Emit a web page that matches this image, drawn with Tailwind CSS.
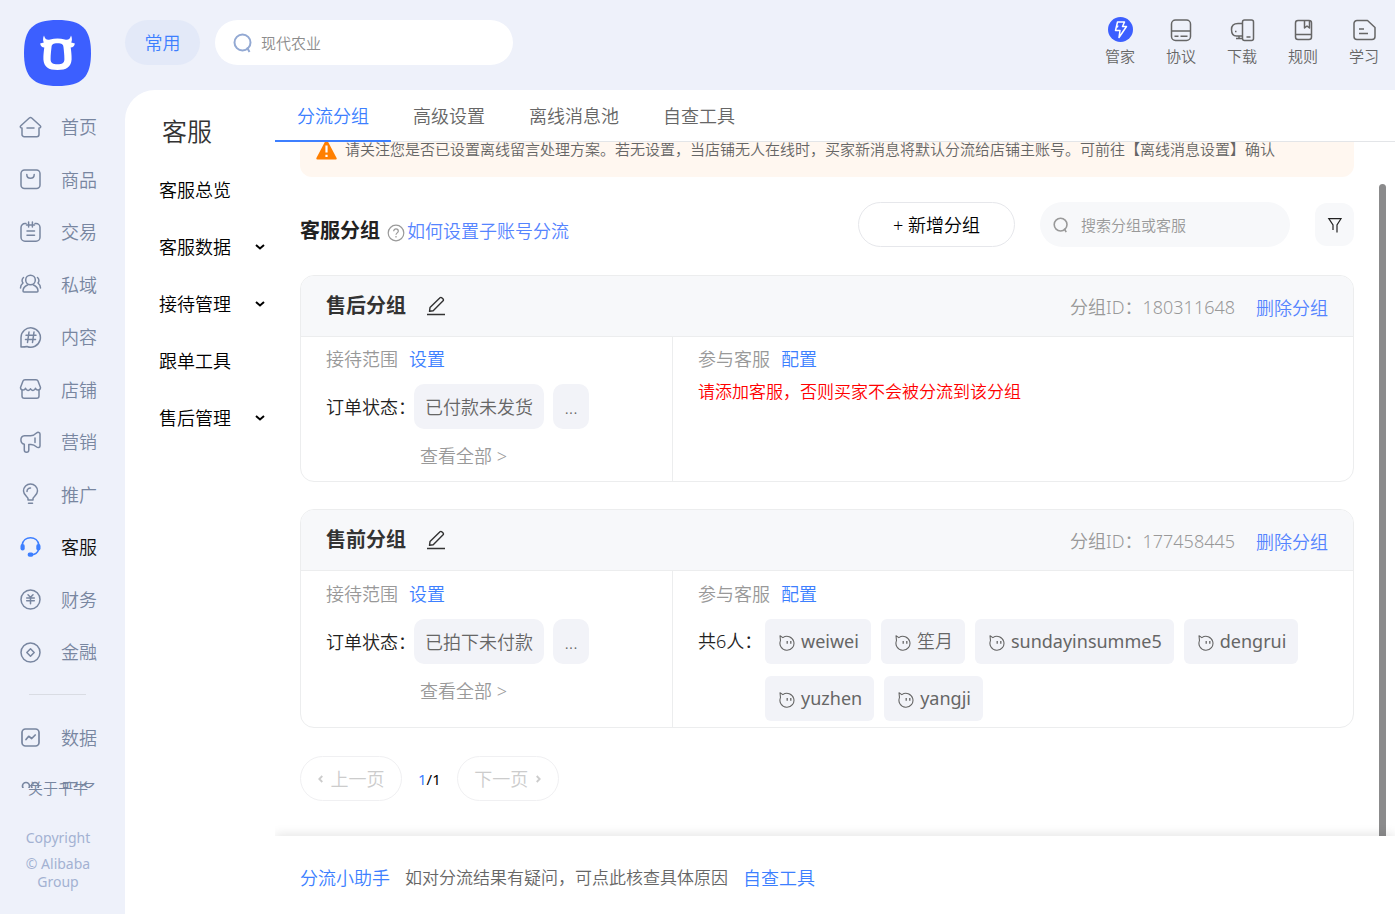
<!DOCTYPE html>
<html lang="zh-CN">
<head>
<meta charset="utf-8">
<meta name="viewport" content="width=device-width, initial-scale=1">
<title>客服分组</title>
<script src="https://cdn.jsdelivr.net/npm/@tailwindcss/browser@4"></script>
</head>
<body class="flex h-screen overflow-hidden bg-[#eef1fa] font-['Noto_Sans','Noto_Sans_CJK_SC',sans-serif] text-lg leading-6 font-[350] text-[#111]">

<!-- icon symbols -->
<svg class="hidden" aria-hidden="true">
  <symbol id="pencil" viewBox="0 0 20 20"><path d="M1 18.6h18" stroke="currentColor" stroke-width="1.5"/><path d="M4 11.600 14 1.700a1.200 1.200 0 0 1 1.700 0l1.400 1.400a1.200 1.200 0 0 1 0 1.700L7.200 14.700l-3.700.6z" fill="none" stroke="currentColor" stroke-width="1.400" stroke-linejoin="round"/></symbol>
  <symbol id="wang" viewBox="0 0 16 16"><path d="M1 .8 3.900 2.600A7 7 0 1 1 1.500 5.600z" fill="none" stroke="currentColor" stroke-width="1.100" stroke-linejoin="round"/><path d="M8.200 6v2.800M11.800 6v2.800" stroke="currentColor" stroke-width="1.300"/></symbol>
  <symbol id="down" viewBox="0 0 10 6"><path d="M1 1l4 3.500L9 1" fill="none" stroke="currentColor" stroke-width="2"/></symbol>
  <symbol id="search" viewBox="0 0 20 20"><circle cx="9.500" cy="9.500" r="8" fill="none" stroke="currentColor" stroke-width="2"/><path d="M14 14.500l2.500 4.500" stroke="currentColor" stroke-width="2"/></symbol>
</svg>

<aside class="flex w-[125px] shrink-0 flex-col pt-5 text-[#7886a0]">
  <svg class="ml-6 h-[66px] w-[67px] shrink-0" viewBox="0 0 67 66" role="img" aria-label="千牛">
    <path d="M33.500 0C58 0 67 9 67 33S58 66 33.500 66 0 57 0 33 9 0 33.500 0z" fill="#3c5fff"/>
    <path fill="#fff" fill-rule="evenodd" d="M20 15.500c.8 3.500 2.900 5 6.200 4 4.800-1.300 9.800-1.300 14.600 0 3.300 1 5.400-.5 6.200-4 1.200 2.500 1.200 5 .2 7l3.700 1c-.5 2.500-2 3.900-4.200 4 .5 4 1 7 .9 12-.5 7.500-5 10.500-14.100 10.500s-13.600-3-14.100-10.500c-.1-5 .4-8 .9-12-2.200-.1-3.700-1.500-4.200-4l3.700-1c-1-2-1-4.500.2-7zM33.500 23.300c-4.500 0-5.700 1-6 4-.4 4-.9 7-.9 12 0 3.800 2.400 5 6.900 5s6.900-1.200 6.900-5c0-5-.5-8-.9-12-.3-3-1.500-4-6-4z"/>
  </svg>

  <nav class="mt-[15px] min-h-0 flex-1 overflow-hidden" aria-label="主导航">
    <div class="flex h-[577px] flex-col justify-between">
      <a href="#" class="flex h-[52px] items-center gap-[19px] pl-[19px]"><svg class="size-[23px]" viewBox="0 0 23 23" fill="none" stroke="currentColor" stroke-width="1.500" stroke-linecap="round" stroke-linejoin="round"><path d="M3 12v6.500a2.200 2.200 0 0 0 2.200 2.200h12.600a2.200 2.200 0 0 0 2.200-2.200V12c1.600 0 2.200-1.300 1.200-2.200L12.700 2a1.800 1.800 0 0 0-2.400 0L1.800 9.800C.8 10.700 1.400 12 3 12z"/><path d="M8 12h7"/></svg>首页</a>
      <a href="#" class="flex h-[52px] items-center gap-[19px] pl-[19px]"><svg class="size-[23px]" viewBox="0 0 23 23" fill="none" stroke="currentColor" stroke-width="1.500" stroke-linecap="round"><rect x="2" y="2" width="19" height="18.500" rx="3.500"/><path d="M7.800 6.500c0 5 7.400 5 7.400 0"/></svg>商品</a>
      <a href="#" class="flex h-[52px] items-center gap-[19px] pl-[19px]"><svg class="size-[23px]" viewBox="0 0 23 23" fill="none" stroke="currentColor" stroke-width="1.500" stroke-linecap="round"><path d="M7 2.500H6A4 4 0 0 0 2 6.500v9.700a4 4 0 0 0 4 4h11a4 4 0 0 0 4-4V6.500a4 4 0 0 0-4-4h-1M7.500 4h8M9.600 1v5M13.400 1v5M8 10h7.500M8 14.200h7.500"/></svg>交易</a>
      <a href="#" class="flex h-[52px] items-center gap-[19px] pl-[19px]"><svg class="size-[23px]" viewBox="0 0 23 23" fill="none" stroke="currentColor" stroke-width="1.500" stroke-linecap="round" stroke-linejoin="round"><circle cx="11.500" cy="7" r="4.800"/><path d="M8.500 12c-3 1.300-4.500 3.500-4.500 6 0 .7.400 1 1 1h13c.6 0 1-.3 1-1 0-2.500-1.500-4.700-4.500-6M4.500 4.500C2.800 6 2.600 8.500 4 10c-1.700 1.300-2.500 3-2.500 5M18.500 4.500c1.700 1.500 1.900 4 .5 5.500 1.700 1.300 2.500 3 2.500 5"/></svg>私域</a>
      <a href="#" class="flex h-[52px] items-center gap-[19px] pl-[19px]"><svg class="size-[23px]" viewBox="0 0 23 23" fill="none" stroke="currentColor" stroke-width="1.500" stroke-linecap="round" stroke-linejoin="round"><path d="M2 21V11.500a9.700 9.700 0 1 1 6 9c-1.500.5-4 .5-6 .5z"/><path d="M10 6 8.500 16.500M15 6l-1.500 10.500M7 9.200h10M6.500 13.500h10"/></svg>内容</a>
      <a href="#" class="flex h-[52px] items-center gap-[19px] pl-[19px]"><svg class="size-[23px]" viewBox="0 0 23 23" fill="none" stroke="currentColor" stroke-width="1.500" stroke-linecap="round" stroke-linejoin="round"><path d="M6 1.800h11c1 0 1.700.5 2 1.300l2.500 6.400c0 3-4 3.500-5 .8-1 2.700-4 2.700-5 .5-1 2.200-4 2.200-5-.5-1 2.700-5 2.200-5-.8L4 3.100c.3-.8 1-1.300 2-1.300zM3 12v6c0 1.500.7 2.300 2.300 2.300h12.400c1.600 0 2.300-.8 2.300-2.300v-6"/></svg>店铺</a>
      <a href="#" class="flex h-[52px] items-center gap-[19px] pl-[19px]"><svg class="size-[23px]" viewBox="0 0 23 23" fill="none" stroke="currentColor" stroke-width="1.500" stroke-linecap="round" stroke-linejoin="round"><path d="M5.500 4.800h6c2.500 0 4.500-1.300 6-2.800 1.400-1.200 3.500-.6 3.500 1v12c0 1.600-2 2-3.300 1-1.700-1.500-3-2.500-5.700-2.500h-2.200V19c0 3-4.500 3-4.500 0v-5.800C1 12.500.5 5.500 5.500 4.800zM16 7v4.500"/></svg>营销</a>
      <a href="#" class="flex h-[52px] items-center gap-[19px] pl-[19px]"><svg class="size-[23px]" viewBox="0 0 23 23" fill="none" stroke="currentColor" stroke-width="1.500" stroke-linecap="round" stroke-linejoin="round"><path d="M9 17v-1.500c0-1.200-4.500-3.500-4.500-7.500a7 7 0 0 1 14 0c0 4-4.500 6.300-4.500 7.500V17zM9.500 20.200h4M8 8.500c0-1.800 1.500-3.500 3.500-3.500"/></svg>推广</a>
      <a href="#" aria-current="page" class="flex h-[52px] items-center gap-[19px] pl-[19px] text-[#111]"><svg class="size-[23px] text-[#3d7fff]" viewBox="0 0 23 23" fill="none" stroke="currentColor" stroke-width="1.600"><path d="M3 9.500C4.300-.8 18.700-.8 20 9.500M19.500 14c-1 2.500-3.500 4.500-6.500 4.800"/><rect x="1.500" y="8" width="4.200" height="6.500" rx="2" fill="currentColor" stroke="none"/><rect x="17.300" y="8" width="4.200" height="6.500" rx="2" fill="currentColor" stroke="none"/><rect x="8.700" y="16.500" width="5.600" height="4.200" rx="1.800" fill="currentColor" stroke="none"/></svg>客服</a>
      <a href="#" class="flex h-[52px] items-center gap-[19px] pl-[19px]"><svg class="size-[23px]" viewBox="0 0 23 23" fill="none" stroke="currentColor" stroke-width="1.500" stroke-linecap="round"><circle cx="11.500" cy="11.500" r="9.500"/><path d="M9 6.800l2.500 2.500L14 6.800M11.500 9.300v6.500M7.700 10h7.600M7.700 12.800h7.600"/></svg>财务</a>
      <a href="#" class="flex h-[52px] items-center gap-[19px] pl-[19px]"><svg class="size-[23px]" viewBox="0 0 23 23" fill="none" stroke="currentColor" stroke-width="1.500" stroke-linejoin="round"><circle cx="11.500" cy="11.500" r="9.500"/><path d="M11.500 7.800l3.700 3.700-3.700 3.700-3.700-3.700z"/></svg>金融</a>
    </div>
    <hr class="my-4 ml-[29px] w-[57px] border-[#d9dce3]">
    <a href="#" class="flex h-[53px] items-center gap-[19px] pl-[19px]"><svg class="size-[23px]" viewBox="0 0 23 23" fill="none" stroke="currentColor" stroke-width="1.700" stroke-linecap="round" stroke-linejoin="round"><rect x="3" y="3" width="17" height="17" rx="3.500"/><path d="M7 13.500l2.700-3.200 3 2.200L16.200 9"/></svg>数据</a>
    <a href="#" class="flex h-[52px] items-center gap-[19px] pl-[19px]"><svg class="size-[23px]" viewBox="0 0 23 23" fill="none" stroke="currentColor" stroke-width="1.700"><circle cx="7" cy="7" r="3.500"/><circle cx="16" cy="7" r="3.500"/><circle cx="7" cy="16" r="3.500"/><circle cx="16" cy="16" r="3.500"/></svg>服务</a>
  </nav>

  <div class="flex h-[126px] w-[116px] shrink-0 flex-col items-center text-center leading-[18px] text-[#a3b1d2]">
    <a href="#" class="-mt-[9px] text-[15px] text-[#7886a0]">关于千牛</a>
    <div class="mt-8 text-sm leading-[18px] font-normal">
      <p>Copyright</p>
      <p class="mt-2">© Alibaba<br>Group</p>
    </div>
  </div>
</aside>

<div class="flex min-w-0 flex-1 flex-col">
  <header class="flex h-[90px] shrink-0 items-start gap-[15px] pt-5 pr-4">
    <button class="h-[45px] w-[75px] rounded-full bg-[#e3e9f8] text-[#3d7fff]">常用</button>
    <label class="flex h-[45px] w-[298px] items-center gap-2 rounded-full bg-white pl-[18px]">
      <svg class="size-5 text-[#93a9d3]" aria-hidden="true"><use href="#search"/></svg>
      <input type="text" aria-label="搜索" placeholder="现代农业" class="min-w-0 flex-1 bg-transparent text-[15px] outline-none placeholder:text-[#8c8c8c]">
    </label>
    <nav class="-mt-1 ml-auto flex gap-[31px] text-[15px] leading-[22px] text-[#666]" aria-label="工具">
      <a href="#" class="flex w-[30px] flex-col items-center gap-[2px]"><svg class="size-[27px]" viewBox="0 0 27 27"><circle cx="13.500" cy="13.500" r="12.500" fill="#3c5fff"/><path d="M10.500 6h7l-2 4.500h4L12 21.500l1-7H8.500z" fill="none" stroke="#fff" stroke-width="1.500" stroke-linejoin="round"/><path d="M11 9.500l-.8 2" stroke="#fff" stroke-width="1.300"/></svg>管家</a>
      <a href="#" class="flex w-[30px] flex-col items-center gap-[2px]"><svg class="size-[27px]" viewBox="0 0 27 27" fill="none" stroke="currentColor" stroke-width="1.500"><rect x="3.500" y="4" width="19" height="20.500" rx="4"/><path d="M3.500 15h19M6.500 20.300h4M12.500 20.300h7"/></svg>协议</a>
      <a href="#" class="flex w-[30px] flex-col items-center gap-[2px]"><svg class="size-[27px]" viewBox="0 0 27 27" fill="none" stroke="currentColor" stroke-width="1.500"><rect x="13.500" y="4" width="11" height="20.500" rx="2"/><path d="M13.500 7.500H9c-4 0-6.500 2-6.500 6s1.500 6.500 5 6.500h6M10 20v2.500M7 22.500h6.500M17.500 21h4M6 15.500h1.500"/></svg>下载</a>
      <a href="#" class="flex w-[30px] flex-col items-center gap-[2px]"><svg class="size-[27px]" viewBox="0 0 27 27" fill="none" stroke="currentColor" stroke-width="1.500" stroke-linejoin="round"><rect x="5.500" y="4.500" width="16" height="19" rx="2.500"/><path d="M5.500 18.500h16M14.500 4.500v7.500l2.500-2 2.500 2V4.500"/></svg>规则</a>
      <a href="#" class="flex w-[30px] flex-col items-center gap-[2px]"><svg class="size-[27px]" viewBox="0 0 27 27" fill="none" stroke="currentColor" stroke-width="1.500" stroke-linejoin="round"><path d="M7 4.500h9.500l7.500 7v9a3 3 0 0 1-3 3H6a3 3 0 0 1-3-3v-13a3 3 0 0 1 3-3zM8 13h5M8 17.500h9"/></svg>学习</a>
    </nav>
  </header>

  <div class="flex min-h-0 flex-1 rounded-tl-[30px] bg-white">
    <nav class="w-[150px] shrink-0 pt-[23px]" aria-label="客服">
      <h1 class="pl-[37px] text-[25px] leading-9 text-[#333]">客服</h1>
      <ul class="mt-3 text-black">
        <li><a href="#" class="flex h-[57px] items-center pl-[34px]">客服总览</a></li>
        <li><a href="#" class="flex h-[57px] items-center justify-between pr-[10px] pl-[34px]">客服数据<svg class="h-[6px] w-[10px]"><use href="#down"/></svg></a></li>
        <li><a href="#" class="flex h-[57px] items-center justify-between pr-[10px] pl-[34px]">接待管理<svg class="h-[6px] w-[10px]"><use href="#down"/></svg></a></li>
        <li><a href="#" class="flex h-[57px] items-center pl-[34px]">跟单工具</a></li>
        <li><a href="#" class="flex h-[57px] items-center justify-between pr-[10px] pl-[34px]">售后管理<svg class="h-[6px] w-[10px]"><use href="#down"/></svg></a></li>
      </ul>
    </nav>

    <main class="flex min-w-0 flex-1 flex-col">
      <div class="flex h-[52px] shrink-0 border-b border-[#e3e5e8] text-[#666]">
        <a href="#" aria-current="page" class="-mb-px flex items-center border-b-2 border-[#3d7fff] px-[22px] pt-[2px] text-[#3d7fff]">分流分组</a>
        <a href="#" class="flex items-center px-[22px]">高级设置</a>
        <a href="#" class="flex items-center px-[22px]">离线消息池</a>
        <a href="#" class="flex items-center px-[22px]">自查工具</a>
      </div>

      <div class="flex min-h-0 flex-1 overflow-hidden">
        <div class="min-w-0 flex-1 pl-[25px]">
          <div class="-mt-5 flex h-[55px] items-center gap-2 rounded-xl bg-[#fff7f0] px-4 pb-px text-[15px] text-[#666]">
            <svg class="size-[21px]" viewBox="0 0 21 21" aria-hidden="true"><path d="M10.500 2 19.700 19.500H1.300z" fill="#ff7f00" stroke="#ff7f00" stroke-width="2" stroke-linejoin="round"/><path d="M10.500 6.500v7M10.500 15.800v2.200" stroke="#fff" stroke-width="2.200"/></svg>
            <p class="whitespace-nowrap">请关注您是否已设置离线留言处理方案。若无设置，当店铺无人在线时，买家新消息将默认分流给店铺主账号。可前往【离线消息设置】确认</p>
          </div>

          <div class="mt-[25px] flex items-center gap-[25px]">
            <div class="mr-auto flex items-center pt-3">
              <h2 class="text-xl leading-6 font-bold text-[#222]">客服分组</h2>
              <svg class="mt-1 mr-[2px] ml-[7px] size-[18px]" viewBox="0 0 18 18" fill="none" stroke="#999" stroke-width="1.200"><circle cx="9" cy="9" r="7.800"/><path d="M6.700 7.200c0-3 4.600-3 4.600 0 0 1.700-2.300 1.700-2.300 3.600M9 12v1.500"/></svg>
              <a href="#" class="text-[#5584ff]">如何设置子账号分流</a>
            </div>
            <button class="h-[45px] w-[157px] rounded-full border border-[#e6e7eb] text-black">+ 新增分组</button>
            <label class="flex h-[45px] w-[250px] items-center gap-3 rounded-full bg-[#f7f8fa] pl-[13px]">
              <svg class="size-4 text-[#999]" aria-hidden="true"><use href="#search"/></svg>
              <input type="text" aria-label="搜索分组或客服" placeholder="搜索分组或客服" class="min-w-0 flex-1 bg-transparent text-[15px] outline-none placeholder:text-[#999]">
            </label>
            <button aria-label="筛选" class="flex h-[43px] w-[39px] items-center justify-center rounded-xl bg-[#f7f8fa]"><svg class="size-4" viewBox="0 0 16 16" fill="none" stroke="#222" stroke-width="1.200"><path d="M10 15.500V8l4-6.300H1.800L6 8v5"/></svg></button>
          </div>

          <section class="mt-7 overflow-hidden rounded-[14px] border border-[#ecedee]">
            <div class="flex h-[61px] items-center border-b border-[#ecedee] bg-[#f7f8fa] px-[25px]">
              <h3 class="text-xl leading-6 font-bold text-[#333]">售后分组</h3>
              <button aria-label="编辑售后分组" class="ml-5 text-[#333]"><svg class="size-5"><use href="#pencil"/></svg></button>
              <span class="mr-[21px] ml-auto pt-[2px] text-[#999]">分组ID：180311648</span>
              <a href="#" class="pt-[3px] text-[#5584ff]">删除分组</a>
            </div>
            <div class="flex">
              <div class="w-[372px] shrink-0 border-r border-[#ecedee] pt-[10px] pb-[13px] pl-[25px]">
                <p class="text-[#999]">接待范围<a href="#" class="ml-[11px] text-[#3d7fff]">设置</a></p>
                <div class="mt-[13px] flex items-center">
                  <span class="w-[88px] whitespace-nowrap text-[#222]">订单状态：</span>
                  <span class="flex h-[45px] items-center rounded-[10px] bg-[#f2f3f8] px-[11px] text-[#666]">已付款未发货</span>
                  <button class="ml-[9px] h-[45px] w-9 rounded-[10px] bg-[#f2f3f8] text-[#666]">...</button>
                </div>
                <a href="#" class="mt-[15px] ml-[94px] block text-[#999]">查看全部 &gt;</a>
              </div>
              <div class="flex-1 px-[25px] pt-[10px]">
                <p class="text-[#999]">参与客服<a href="#" class="ml-[11px] text-[#3d7fff]">配置</a></p>
                <p class="mt-[9px] text-[17px] text-[#f00]">请添加客服，否则买家不会被分流到该分组</p>
              </div>
            </div>
          </section>

          <section class="mt-[27px] overflow-hidden rounded-[14px] border border-[#ecedee]">
            <div class="flex h-[61px] items-center border-b border-[#ecedee] bg-[#f7f8fa] px-[25px]">
              <h3 class="text-xl leading-6 font-bold text-[#333]">售前分组</h3>
              <button aria-label="编辑售前分组" class="ml-5 text-[#333]"><svg class="size-5"><use href="#pencil"/></svg></button>
              <span class="mr-[21px] ml-auto pt-[2px] text-[#999]">分组ID：177458445</span>
              <a href="#" class="pt-[3px] text-[#5584ff]">删除分组</a>
            </div>
            <div class="flex">
              <div class="w-[372px] shrink-0 border-r border-[#ecedee] pt-[11px] pb-[13px] pl-[25px]">
                <p class="text-[#999]">接待范围<a href="#" class="ml-[11px] text-[#3d7fff]">设置</a></p>
                <div class="mt-[13px] flex items-center">
                  <span class="w-[88px] whitespace-nowrap text-[#222]">订单状态：</span>
                  <span class="flex h-[45px] items-center rounded-[10px] bg-[#f2f3f8] px-[11px] text-[#666]">已拍下未付款</span>
                  <button class="ml-[9px] h-[45px] w-9 rounded-[10px] bg-[#f2f3f8] text-[#666]">...</button>
                </div>
                <a href="#" class="mt-[15px] ml-[94px] block text-[#999]">查看全部 &gt;</a>
              </div>
              <div class="flex-1 px-[25px] pt-[11px] pb-[6px]">
                <p class="text-[#999]">参与客服<a href="#" class="ml-[11px] text-[#3d7fff]">配置</a></p>
                <div class="mt-[13px] flex">
                  <span class="w-[67px] shrink-0 whitespace-nowrap leading-[45px] text-[#222]">共6人：</span>
                  <ul class="flex flex-wrap gap-x-[10px] gap-y-3 font-normal text-[#666]">
                    <li class="flex h-[45px] items-center gap-[6px] rounded-md bg-[#f2f3f8] pr-3 pb-px pl-[14px]"><svg class="mt-[3px] size-4"><use href="#wang"/></svg>weiwei</li>
                    <li class="flex h-[45px] items-center gap-[6px] rounded-md bg-[#f2f3f8] pr-3 pb-px pl-[14px] font-[350]"><svg class="mt-[3px] size-4"><use href="#wang"/></svg>笙月</li>
                    <li class="flex h-[45px] items-center gap-[6px] rounded-md bg-[#f2f3f8] pr-3 pb-px pl-[14px]"><svg class="mt-[3px] size-4"><use href="#wang"/></svg>sundayinsumme5</li>
                    <li class="flex h-[45px] items-center gap-[6px] rounded-md bg-[#f2f3f8] pr-3 pb-px pl-[14px]"><svg class="mt-[3px] size-4"><use href="#wang"/></svg>dengrui</li>
                    <li class="flex h-[45px] items-center gap-[6px] rounded-md bg-[#f2f3f8] pr-3 pb-px pl-[14px]"><svg class="mt-[3px] size-4"><use href="#wang"/></svg>yuzhen</li>
                    <li class="flex h-[45px] items-center gap-[6px] rounded-md bg-[#f2f3f8] pr-3 pb-px pl-[14px]"><svg class="mt-[3px] size-4"><use href="#wang"/></svg>yangji</li>
                  </ul>
                </div>
              </div>
            </div>
          </section>

          <div class="mt-7 flex items-center gap-4">
            <button disabled class="flex h-[45px] w-[102px] items-center justify-center gap-2 rounded-full border border-[#f0f0f2] text-[#ccc]"><svg class="h-2 w-[5px]" viewBox="0 0 5 8" fill="none" stroke="currentColor" stroke-width="1.800"><path d="M4.300 1 1.300 4l3 3"/></svg>上一页</button>
            <span class="text-[15px] font-normal text-black"><span class="text-[#3d7fff]">1</span>/1</span>
            <button disabled class="flex h-[45px] w-[102px] items-center justify-center gap-2 rounded-full border border-[#f0f0f2] text-[#ccc]">下一页<svg class="h-2 w-[5px]" viewBox="0 0 5 8" fill="none" stroke="currentColor" stroke-width="1.800"><path d="M.7 1l3 3-3 3"/></svg></button>
          </div>
        </div>
        <!-- scroll thumb -->
        <div class="flex w-[41px] shrink-0 justify-end pt-[42px] pr-[9px]"><div class="w-[7px] rounded-t-full bg-[#8b8b8c]"></div></div>
      </div>

      <footer class="relative flex h-[78px] shrink-0 items-center gap-[15px] bg-white pt-[5px] pl-[25px] text-[#666] shadow-[0_-2px_10px_rgba(0,0,0,0.1)] [clip-path:inset(-12px_0_0_0)]">
        <a href="#" class="text-[#3d7fff]">分流小助手</a>
        <p class="text-[17px] whitespace-nowrap">如对分流结果有疑问，可点此核查具体原因</p>
        <a href="#" class="text-[#3d7fff]">自查工具</a>
      </footer>
    </main>
  </div>
</div>
</body>
</html>
